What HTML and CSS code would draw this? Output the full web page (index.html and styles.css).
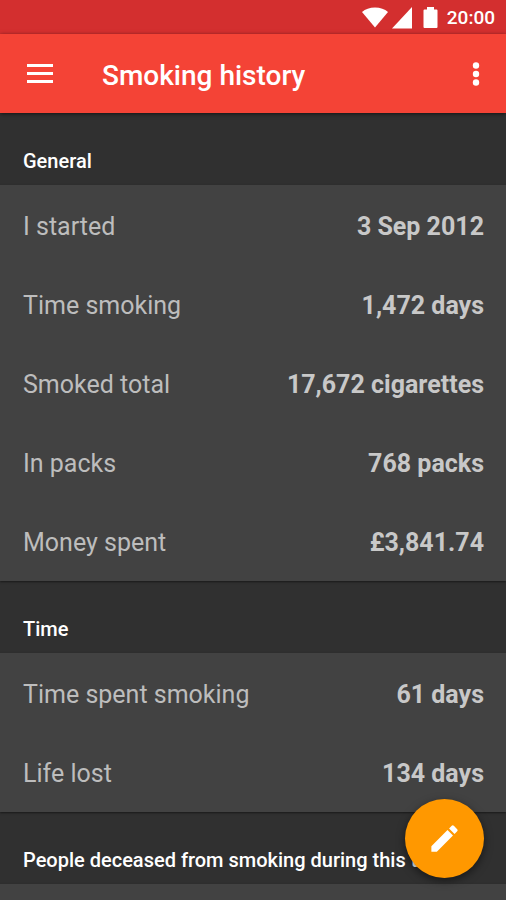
FILE: index.html
```html
<!DOCTYPE html>
<html lang="en">
<head>
    <meta charset="UTF-8">
    <title>Smoking history</title>
    <meta name="viewport" content="width=device-width, initial-scale=1">
    <link rel="stylesheet" href="styles.css">
</head>
<body>
    <div class="status-bar">
        <svg class="wifi" width="28" height="22" viewBox="0 0 28 22" aria-hidden="true">
            <path d="M1 5Q6 .5 14 .5T27 5L14 20.500z"/>
        </svg>
        <svg class="signal" width="21" height="22" viewBox="0 0 21 22" aria-hidden="true">
            <path d="M0 21.500L20 0v21.500z"/>
        </svg>
        <svg class="battery" width="15" height="22" viewBox="0 0 15 22" aria-hidden="true">
            <path d="M4 0h7v2.500h2.500a1 1 0 0 1 1 1V20a1 1 0 0 1-1 1h-12a1 1 0 0 1-1-1V3.500a1 1 0 0 1 1-1H4z"/>
        </svg>
        <span class="clock">20:00</span>
    </div>
    <header class="toolbar">
        <button class="icon-button" aria-label="Open menu">
            <svg width="28" height="22" viewBox="0 0 28 22" aria-hidden="true">
                <path d="M1 1h26v3H1zM1 9h26v3H1zM1 17h26v3H1z"/>
            </svg>
        </button>
        <h1>Smoking history</h1>
        <button class="icon-button" aria-label="More options">
            <svg width="8" height="24" viewBox="0 0 8 24" aria-hidden="true">
                <circle cx="4" cy="3.500" r="3.200"/>
                <circle cx="4" cy="12" r="3.200"/>
                <circle cx="4" cy="20.500" r="3.200"/>
            </svg>
        </button>
    </header>
    <main>
        <h2>General</h2>
        <dl class="card">
            <div class="row"><dt>I started</dt><dd>3 Sep 2012</dd></div>
            <div class="row"><dt>Time smoking</dt><dd>1,472 days</dd></div>
            <div class="row"><dt>Smoked total</dt><dd>17,672 cigarettes</dd></div>
            <div class="row"><dt>In packs</dt><dd>768 packs</dd></div>
            <div class="row"><dt>Money spent</dt><dd>£3,841.74</dd></div>
        </dl>
        <h2>Time</h2>
        <dl class="card">
            <div class="row"><dt>Time spent smoking</dt><dd>61 days</dd></div>
            <div class="row"><dt>Life lost</dt><dd>134 days</dd></div>
        </dl>
        <h2>People deceased from smoking during this time</h2>
        <div class="card card-fill"></div>
    </main>
    <button class="fab" aria-label="Edit">
        <svg width="35" height="35" viewBox="0 0 24 24" aria-hidden="true">
            <path d="M3 17.250V21h3.750L17.810 9.940l-3.750-3.750L3 17.250zM20.710 7.040a1 1 0 0 0 0-1.410l-2.340-2.340a1 1 0 0 0-1.410 0l-1.830 1.830 3.750 3.750 1.830-1.830z"/>
        </svg>
    </button>
</body>
</html>
```
FILE: styles.css
```css
* {
    box-sizing: border-box;
}

body {
    display: flex;
    flex-direction: column;
    height: 100vh;
    margin: 0;
    overflow: hidden;
    background-color: #303030;
    color: #fff;
    font-family: Roboto, "Liberation Sans", sans-serif;
}

svg {
    display: block;
    fill: #fff;
}

button {
    padding: 0;
    border: none;
    background: none;
    cursor: pointer;
}

/* Status bar */
.status-bar {
    display: flex;
    flex: none;
    justify-content: flex-end;
    align-items: center;
    height: 34px;
    padding: 2px 11px 0 0;
    background-color: #d32f2f;
}

.signal {
    margin-left: 3px;
}

.battery {
    margin: 0 9px 0 10px;
}

.clock {
    font-size: 19px;
    font-weight: 500;
    line-height: 24px;
}

/* Toolbar */
.toolbar {
    display: flex;
    flex: none;
    align-items: center;
    height: 79px;
    padding: 0 26px;
    background-color: #f44336;
    box-shadow: 0 1px 4px rgba(0, 0, 0, 0.6);
    z-index: 1;
}

h1 {
    flex: 1;
    margin: 0 0 0 48px;
    padding-top: 4px;
    font-size: 28px;
    font-weight: 500;
    line-height: 32px;
}

/* Lists */
main {
    display: flex;
    flex: 1;
    flex-direction: column;
    min-height: 0;
}

h2 {
    flex: none;
    height: 72px;
    margin: 0;
    padding: 36px 23px 0;
    font-size: 20px;
    font-weight: 500;
    line-height: 24px;
    white-space: nowrap;
    overflow: hidden;
}

.card {
    flex: none;
    margin: 0;
    padding-top: 1px;
    background-color: #424242;
    box-shadow: 0 1px 2px rgba(0, 0, 0, 0.5);
}

.card-fill {
    flex: 1;
}

.row {
    display: flex;
    justify-content: space-between;
    align-items: center;
    height: 79px;
    padding: 3px 22px 0 23px;
    font-size: 25px;
    line-height: 32px;
}

dt {
    color: #bdbdbd;
}

dd {
    margin: 0;
    color: #c8c8c8;
    font-weight: 700;
}

/* Floating button */
.fab {
    display: flex;
    position: fixed;
    right: 22px;
    bottom: 22px;
    z-index: 2;
    justify-content: center;
    align-items: center;
    width: 79px;
    height: 79px;
    border-radius: 50%;
    background-color: #ff9800;
    box-shadow: 0 3px 8px rgba(0, 0, 0, 0.5);
}
```
